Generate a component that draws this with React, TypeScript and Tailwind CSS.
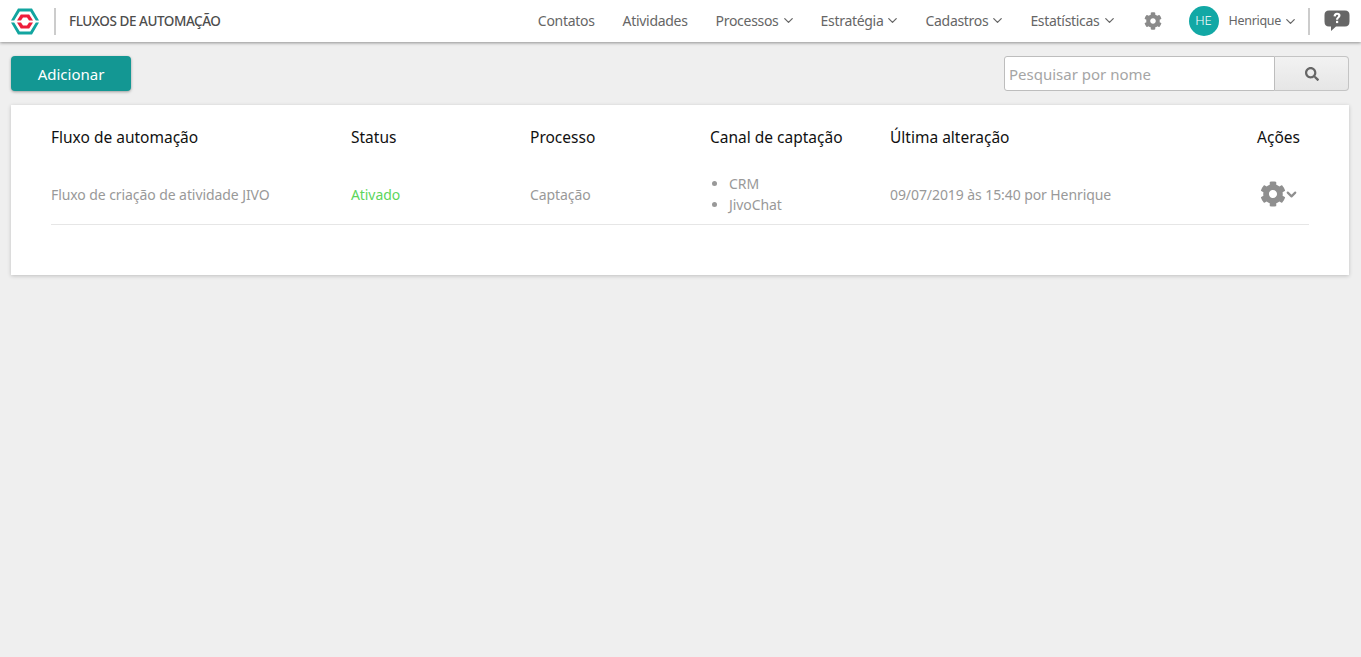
import { FaCog, FaSearch } from "react-icons/fa";
import { ChevronDown } from "lucide-react";

const nav = [
  { label: "Contatos", caret: false },
  { label: "Atividades", caret: false },
  { label: "Processos", caret: true },
  { label: "Estratégia", caret: true },
  { label: "Cadastros", caret: true },
  { label: "Estatísticas", caret: true },
];

function Caret() {
  return <ChevronDown size={15} strokeWidth={2} className="shrink-0 ml-[2px] -mr-[3px]" />;
}

function Logo() {
  return (
    <svg width="28" height="27" viewBox="0 0 28 27" className="shrink-0">
      <path d="M7 0.5H21L28 12.5H24.8L19.3 3.5H8.7L3.2 12.5H0Z" fill="#12a5a0" />
      <path d="M0 14.5H3.2L8.7 23.5H19.3L24.8 14.5H28L21 26.5H7Z" fill="#12a5a0" />
      <path d="M6 12.5L9.8 6.5H18.2L22 12.5H18L16 9.5H12L10 12.5Z" fill="#ee1c3a" />
      <path d="M6 14.5L9.8 20.5H18.2L22 14.5H18L16 17.5H12L10 14.5Z" fill="#ee1c3a" />
    </svg>
  );
}

function Help() {
  return (
    <svg width="26" height="22" viewBox="0 0 26 22" className="shrink-0">
      <path d="M5 0.5H21Q25.5 0.5 25.5 5V11.5Q25.5 16.5 21 16.5H12L7 21V16.5H5Q0.5 16.5 0.5 11.5V5Q0.5 0.5 5 0.5Z" fill="#666666" />
      <path d="M9.5 6.3Q9.8 2.8 13 2.8Q16.5 2.8 16.5 5.6Q16.5 7.3 14.8 8.2Q14.1 8.7 14.1 9.8H12Q11.9 7.9 13.3 7Q14.2 6.4 14.2 5.6Q14.2 4.7 13 4.7Q12 4.7 11.8 6.5Z" fill="#fff" />
      <rect x="12" y="10.8" width="2.2" height="2.3" fill="#fff" />
    </svg>
  );
}

export default function App() {
  return (
    <div className="min-h-[657px] bg-[#efefef] font-['Noto_Sans','Open_Sans',sans-serif]">
      <header className="h-[42px] bg-white shadow-[0_1px_3px_rgba(0,0,0,0.4)] flex items-center pl-[11px] pr-[11px] relative">
        <Logo />
        <div className="w-[2px] h-[27px] bg-[#cccccc] ml-[15px]" />
        <div className="ml-[13px] text-[13.5px] font-medium text-[#4d4d4d] tracking-[-0.45px]">FLUXOS DE AUTOMAÇÃO</div>
        <nav className="ml-auto flex items-center gap-[28px] text-[14px] text-[#666] tracking-[-0.3px] -mt-[1px]">
          {nav.map((n) => (
            <span key={n.label} className="flex items-center">
              {n.label}
              {n.caret && <Caret />}
            </span>
          ))}
        </nav>
        <FaCog size={18} className="text-[#8a8a8a] ml-[30px]" />
        <div className="ml-[27px] w-[30px] h-[30px] rounded-full bg-[#12a8a5] text-white text-[13px] font-light flex items-center justify-center">HE</div>
        <span className="ml-[10px] text-[12.5px] text-[#666] tracking-[-0.3px] flex items-center">Henrique <Caret /></span>
        <div className="w-[2px] h-[27px] bg-[#cccccc] ml-[13px]" />
        <div className="ml-[14px]"><Help /></div>
      </header>
      <div className="pl-[11px] pt-[14px] pr-[12px]">
        <div className="flex items-center justify-between">
          <button className="w-[120px] h-[35px] rounded-[4px] bg-[#139793] text-white text-[15px] pt-[2px] shadow-[0_1px_3px_rgba(0,0,0,0.35)]">Adicionar</button>
          <div className="flex w-[345px] h-[35px]">
            <div className="flex-1 bg-white border border-[#bdbdbd] rounded-l-[3px] flex items-center pl-[4px] pt-[2px] text-[15px] text-[#a5a5a5]">Pesquisar por nome</div>
            <div className="w-[74px] bg-linear-to-b from-[#f2f2f2] to-[#e6e6e6] border border-l-0 border-[#c4c4c4] rounded-r-[4px] flex items-center justify-center text-[#666]"><FaSearch size={14} /></div>
          </div>
        </div>
        <div className="mt-[14px] bg-white shadow-[0_1px_4px_rgba(0,0,0,0.2)] h-[170px] pl-[40px] pr-[40px]">
          <div className="grid grid-cols-[300px_179px_180px_180px_1fr_50px] h-[65px] items-center text-[15.5px] text-[#111]">
            <span>Fluxo de automação</span>
            <span>Status</span>
            <span>Processo</span>
            <span>Canal de captação</span>
            <span>Última alteração</span>
            <span className="justify-self-end mr-[9px]">Ações</span>
          </div>
          <div className="grid grid-cols-[300px_179px_180px_180px_1fr_50px] h-[55px] items-center text-[14px] tracking-[-0.08px] text-[#999] border-b border-[#e6e6e6] pb-[6px]">
            <span>Fluxo de criação de atividade JIVO</span>
            <span className="text-[#5cd65c]">Ativado</span>
            <span>Captação</span>
            <ul className="list-disc pl-[19px] leading-[21px] marker:text-[#999]">
              <li>CRM</li>
              <li>JivoChat</li>
            </ul>
            <span>09/07/2019 às 15:40 por Henrique</span>
            <span className="flex items-center text-[#8f8f8f] ml-[1px]">
              <FaCog size={26} className="shrink-0" />
              <ChevronDown size={15} strokeWidth={3.5} className="shrink-0 -ml-[2px]" />
            </span>
          </div>
        </div>
      </div>
    </div>
  );
}
